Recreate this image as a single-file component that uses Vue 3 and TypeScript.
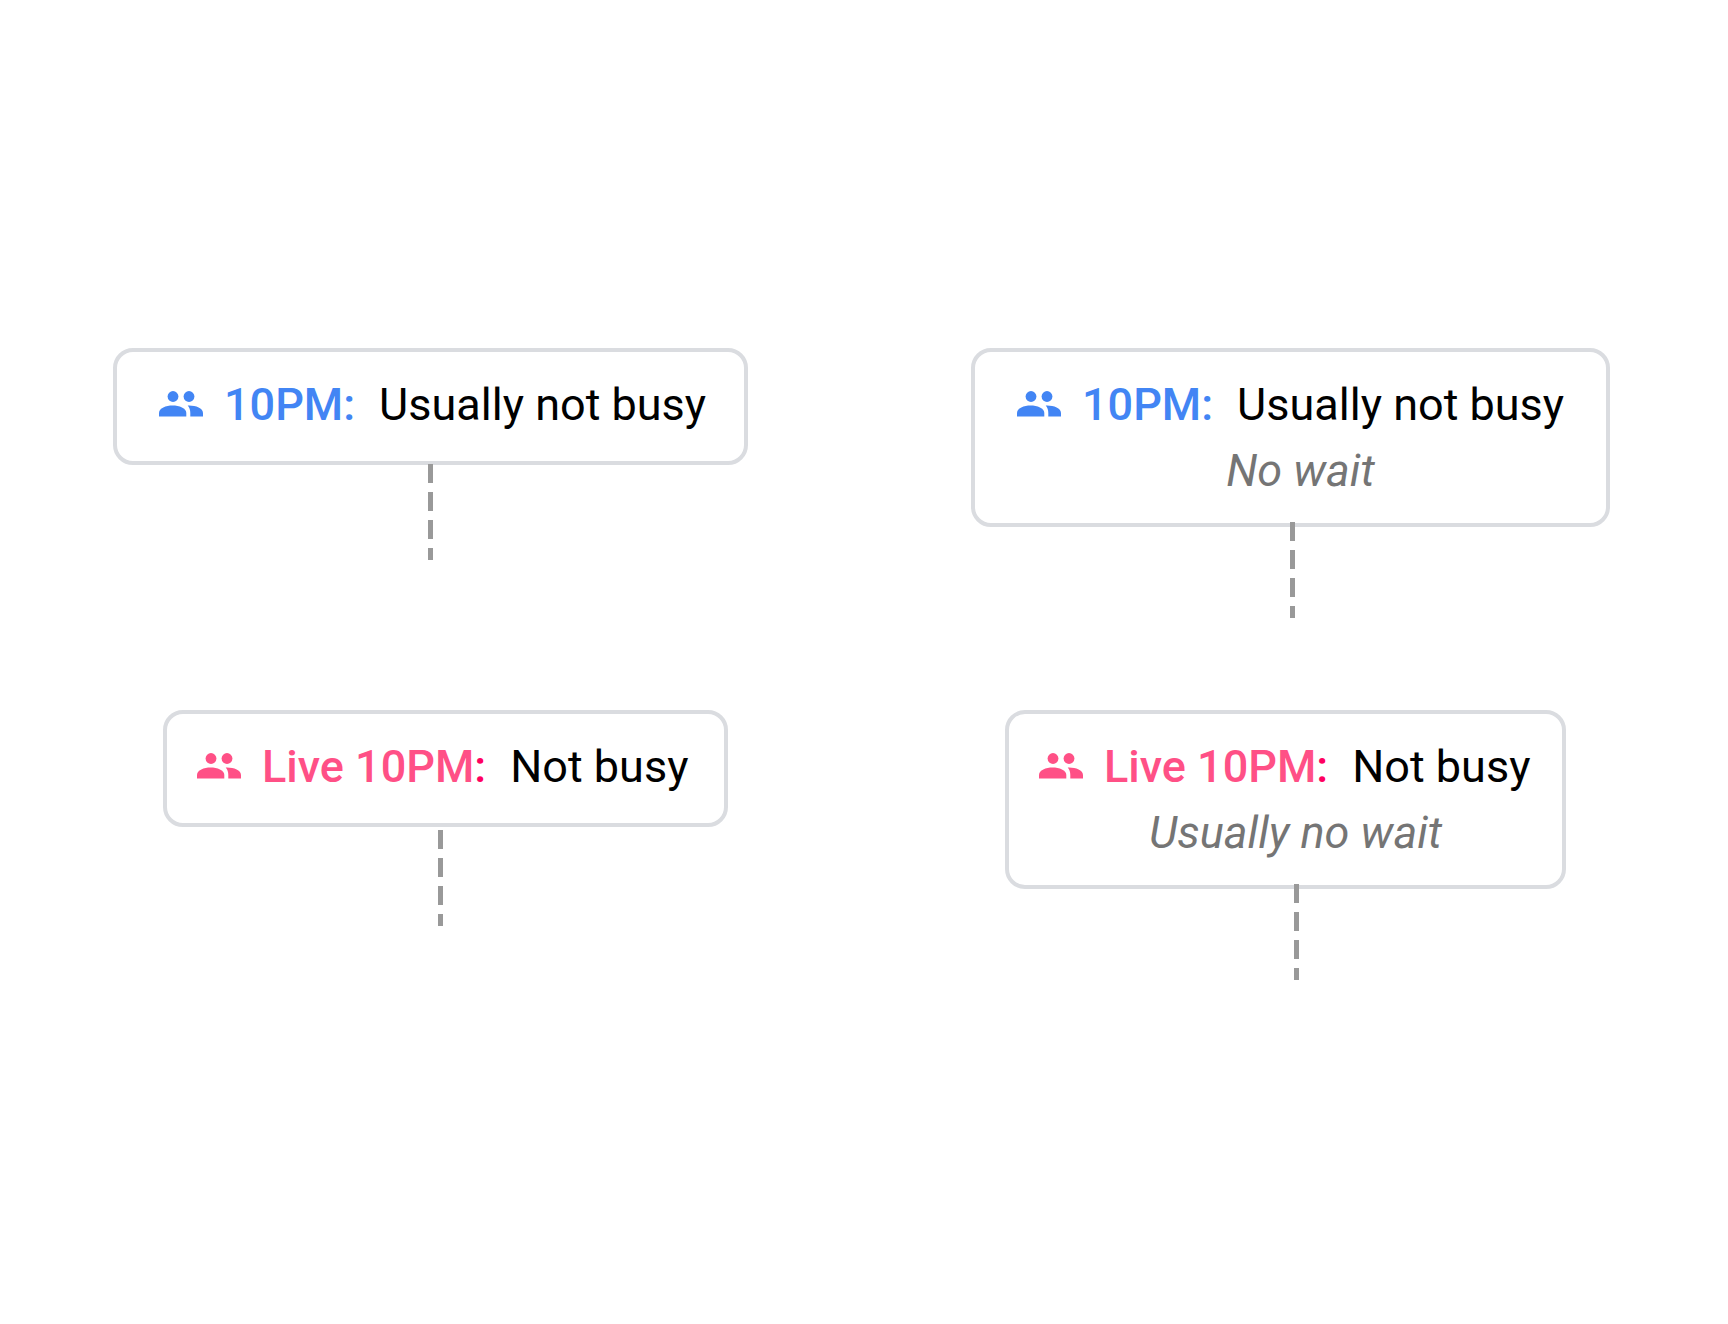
<script setup lang="ts">
interface Callout {
  id: string
  live: boolean
  time: string
  status: string
  wait?: string
}

const callouts: Callout[] = [
  { id: 'usual', live: false, time: '10PM', status: 'Usually not busy' },
  { id: 'usual-wait', live: false, time: '10PM', status: 'Usually not busy', wait: 'No wait' },
  { id: 'live', live: true, time: 'Live 10PM', status: 'Not busy' },
  { id: 'live-wait', live: true, time: 'Live 10PM', status: 'Not busy', wait: 'Usually no wait' },
]
</script>

<template>
  <main class="board">
    <section v-for="c in callouts" :key="c.id" class="callout" :class="[c.id, { pink: c.live }]">
      <div class="bubble">
        <p class="line">
          <svg class="people" viewBox="0 0 44 26" aria-hidden="true">
            <circle cx="14" cy="5.5" r="5.4" />
            <circle cx="30" cy="5.5" r="5.4" />
            <path d="M0 25.500V22C0 17 7 14.500 13.600 14.500S27.300 17 27.300 22v3.500z" />
            <path d="M28.700 14.600C36 14.200 44 17 44 22v3.500H31.300V22c0-3-1-5.500-2.600-7.400z" />
          </svg>
          <span class="time">{{ c.time }}<span class="colon">:</span></span>
          <span class="status">{{ c.status }}</span>
        </p>
        <p v-if="c.wait" class="wait">{{ c.wait }}</p>
      </div>
      <div class="stem"></div>
    </section>
  </main>
</template>

<style>
body {
  margin: 0;
  background: #fff;
}
</style>

<style scoped>
.board {
  display: grid;
  grid-template-columns: 1fr 1fr;
  grid-template-rows: 362px auto;
  align-items: start;
  padding: 348px 0;
  font-family: Roboto, "Liberation Sans", sans-serif;
  font-size: 45px;
  line-height: 66px;
  color: #000;
}
.callout {
  display: flex;
  flex-direction: column;
}
.bubble {
  box-sizing: border-box;
  min-height: 117px;
  padding: 20px 0 19px;
  border: 4px solid #dadce0;
  border-radius: 20px;
}
.usual { width: 635px; margin-left: 113px; }
.usual-wait { width: 639px; margin-left: 107px; }
.live { width: 565px; margin-left: 163px; }
.live-wait { width: 561px; margin-left: 141px; }
.line,
.wait {
  margin: 0;
  white-space: nowrap;
}
.line {
  display: flex;
  align-items: center;
  padding-left: 42px;
}
.pink .line {
  padding-left: 30px;
}
.people {
  flex: none;
  width: 44px;
  height: 26px;
  margin: 0 21px 2px 0;
  fill: #4285f4;
}
.time {
  margin-right: 24px;
  font-weight: 500;
  color: #4285f4;
}
.pink .people {
  fill: #ff5086;
}
.pink .time {
  color: #ff5086;
}
.pink .colon {
  color: #ff0060;
}
.wait {
  padding-left: 20px;
  font-style: italic;
  text-align: center;
  color: #757575;
}
.stem {
  z-index: 1;
  align-self: center;
  width: 5px;
  height: 96px;
  margin-top: -1px;
  background: repeating-linear-gradient(#999 0 19px, transparent 19px 28px);
}
.usual-wait .stem {
  margin: -5px 0 0 4px;
}
.live .stem {
  margin: 3px 10px 0 0;
}
.live-wait .stem {
  margin: -5px 0 0 22px;
}
</style>
